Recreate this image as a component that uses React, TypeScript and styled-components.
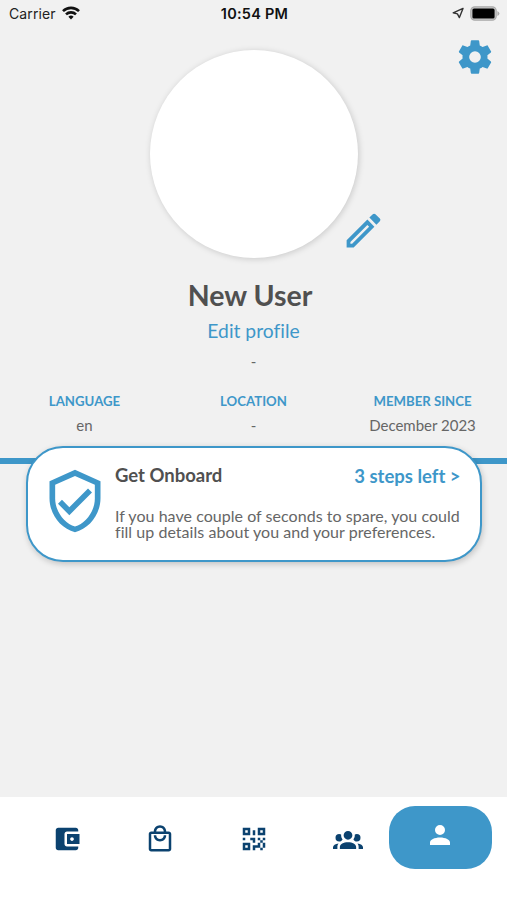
import React from "react";
import styled, { createGlobalStyle } from "styled-components";

const BLUE = "#3e97c9";
const NAVY = "#0b426f";

const Global = createGlobalStyle`
  * { box-sizing: border-box; }
  body {
    margin: 0;
    background: #f1f1f1;
    font-family: Lato, "Open Sans", sans-serif;
    font-variant-ligatures: none;
    color: #666;
  }
`;

const Screen = styled.div`
  width: 507px;
  height: 900px;
  display: flex;
  flex-direction: column;
  background: #f1f1f1;
  overflow: hidden;
`;

const StatusBar = styled.header`
  display: grid;
  grid-template-columns: 1fr auto 1fr;
  align-items: center;
  height: 28px;
  padding: 0 7px 2px 9px;
  font-family: Inter, sans-serif;
  font-size: 14px;
  color: #222;
`;
const Carrier = styled.div`
  display: flex;
  align-items: center;
  gap: 6px;
  letter-spacing: 0.1px;
`;
const Clock = styled.div`
  font-weight: 600;
  font-size: 14.5px;
  letter-spacing: 0.25px;
  color: #111;
`;
const Indicators = styled.div`
  display: flex;
  justify-content: flex-end;
  align-items: center;
  gap: 6px;
`;

const Profile = styled.section`
  position: relative;
  display: flex;
  flex-direction: column;
  align-items: center;
  padding-top: 21.5px;
  height: 365px;
`;
const Avatar = styled.div`
  width: 208px;
  height: 208px;
  border-radius: 50%;
  background: #fff;
  box-shadow: 1px 1px 6px rgba(0, 0, 0, 0.17);
`;
const IconButton = styled.button<{ $top: number; $left: number }>`
  position: absolute;
  top: ${(p) => p.$top}px;
  left: ${(p) => p.$left}px;
  padding: 0;
  border: 0;
  background: none;
  line-height: 0;
`;
const Name = styled.h1`
  margin: 19.5px 7px 0 0;
  font-size: 28.5px;
  line-height: 36px;
  font-weight: 700;
  color: #505050;
`;
const EditLink = styled.a`
  margin-top: 6px;
  font-size: 19.3px;
  line-height: 24px;
  color: ${BLUE};
`;
const Bio = styled.p`
  margin: 8px 0 0;
  font-size: 15px;
  line-height: 20px;
`;

const Stats = styled.dl`
  display: grid;
  grid-template-columns: repeat(3, 169px);
  height: 65px;
  margin: 0;
  text-align: center;
`;
const StatLabel = styled.dt`
  font-size: 13.2px;
  line-height: 16px;
  font-weight: 700;
  color: ${BLUE};
`;
const StatValue = styled.dd`
  margin: 6px 0 0;
  font-size: 15px;
  line-height: 20px;
`;

const Banner = styled.section`
  display: flex;
  flex-direction: column;
  flex: 1;
`;
const Divider = styled.div`
  height: 6px;
  flex: none;
  background: ${BLUE};
`;
const Card = styled.article`
  position: relative;
  display: flex;
  width: 456px;
  height: 116px;
  margin: -18px 0 0 26px;
  padding: 18.5px 0 0 13px;
  border: 2.5px solid ${BLUE};
  border-radius: 37px;
  background: #fff;
  box-shadow: 1px 2px 6px rgba(0, 0, 0, 0.2);
`;
const CardBody = styled.div`
  width: 345.5px;
  margin: -3px 0 0 6px;
`;
const CardHead = styled.div`
  display: flex;
  justify-content: space-between;
  font-size: 18.5px;
  line-height: 22px;
  font-weight: 700;
  white-space: nowrap;
`;
const CardTitle = styled.span`
  color: #505050;
`;
const CardAction = styled.span`
  padding-top: 1px;
  color: ${BLUE};
`;
const CardText = styled.p`
  margin: 21px 0 0;
  font-size: 16px;
  line-height: 16px;
  letter-spacing: 0.04px;
  white-space: nowrap;
`;

const TabBar = styled.nav`
  display: flex;
  height: 103.5px;
  padding: 9.5px 15px 0 20px;
  background: #fff;
`;
const Tab = styled.button<{ $active?: boolean }>`
  display: flex;
  align-items: center;
  justify-content: center;
  flex: none;
  width: ${(p) => (p.$active ? 103.5 : 93.6)}px;
  height: ${(p) => (p.$active ? 63 : 66)}px;
  margin-left: ${(p) => (p.$active ? -5.8 : 0)}px;
  padding: 0 0 ${(p) => (p.$active ? 5 : 0)}px;
  border: 0;
  border-radius: 26px;
  background: ${(p) => (p.$active ? BLUE : "transparent")};
  color: ${(p) => (p.$active ? "#fff" : NAVY)};
`;

const paths = {
  cog: "M12 15.5A3.5 3.5 0 0 1 8.5 12 3.5 3.5 0 0 1 12 8.5a3.5 3.5 0 0 1 3.5 3.5 3.5 3.5 0 0 1-3.5 3.5m7.43-2.53c.04-.32.07-.64.07-.97s-.03-.66-.07-1l2.11-1.63c.19-.15.24-.42.12-.64l-2-3.46c-.12-.22-.39-.31-.61-.22l-2.49 1c-.52-.39-1.06-.73-1.69-.98l-.37-2.65A.506.506 0 0 0 14 2h-4c-.25 0-.46.18-.5.42l-.37 2.65c-.63.25-1.17.59-1.69.98l-2.49-1c-.22-.09-.49 0-.61.22l-2 3.46c-.13.22-.07.49.12.64L4.57 11c-.04.34-.07.67-.07 1s.03.65.07.97l-2.11 1.66c-.19.15-.25.42-.12.64l2 3.46c.12.22.39.3.61.22l2.49-1.01c.52.4 1.06.74 1.69.99l.37 2.65c.04.24.25.42.5.42h4c.25 0 .46-.18.5-.42l.37-2.65c.63-.26 1.17-.59 1.69-.99l2.49 1.01c.22.08.49 0 .61-.22l2-3.46c.12-.22.07-.49-.12-.64z",
  pencil: "M14.06 9l.94.94L5.92 19H5v-.92L14.06 9m3.6-6c-.25 0-.51.1-.7.29l-1.83 1.83 3.75 3.75 1.83-1.83c.39-.39.39-1.04 0-1.41l-2.34-2.34c-.2-.2-.45-.29-.71-.29m-3.6 3.19L3 17.25V21h3.75L17.81 9.94z",
  shield: "M21 11c0 5.55-3.84 10.74-9 12-5.16-1.26-9-6.45-9-12V5l9-4 9 4zm-9 10c3.75-1 7-5.46 7-9.78V6.3l-7-3.12L5 6.3v4.92C5 15.54 8.25 20 12 21m-2-4-4-4 1.41-1.41L10 14.17l6.59-6.59L18 9",
  wallet: "M21 18v1c0 1.1-.9 2-2 2H5c-1.11 0-2-.9-2-2V5c0-1.1.89-2 2-2h14c1.1 0 2 .9 2 2v1h-9c-1.11 0-2 .9-2 2v8c0 1.1.89 2 2 2zm-9-2h10V8H12zm4-2.5c-.83 0-1.5-.67-1.5-1.5s.67-1.5 1.5-1.5 1.5.67 1.5 1.5-.67 1.5-1.5 1.5",
  bag: "M19 6h-2c0-2.76-2.24-5-5-5S7 3.24 7 6H5c-1.1 0-1.99.9-1.99 2L3 20c0 1.1.9 2 2 2h14c1.1 0 2-.9 2-2V8c0-1.1-.9-2-2-2m-7-3c1.66 0 3 1.34 3 3H9c0-1.66 1.34-3 3-3m7 17H5V8h14zm-7-8c-1.66 0-3-1.34-3-3H7c0 2.76 2.24 5 5 5s5-2.24 5-5h-2c0 1.66-1.34 3-3 3",
  qr: "M3 11h2v2H3v-2m8-6h2v4h-2V5m-2 6h4v4h-2v-2H9v-2m6 0h2v2h2v-2h2v2h-2v2h2v4h-2v2h-2v-2h-4v2h-2v-4h4v-2h2v-2h-2v-2m4 8v-4h-2v4h2M15 3h6v6h-6V3m2 2v2h2V5h-2M3 3h6v6H3V3m2 2v2h2V5H5M3 15h6v6H3v-6m2 2v2h2v-2H5Z",
  group: "M12 5.5A3.5 3.5 0 0 1 15.5 9a3.5 3.5 0 0 1-3.5 3.5A3.5 3.5 0 0 1 8.5 9 3.5 3.5 0 0 1 12 5.5M5 8c.56 0 1.08.15 1.53.42-.15 1.43.27 2.85 1.13 3.96C7.16 13.34 6.16 14 5 14a3 3 0 0 1-3-3 3 3 0 0 1 3-3m14 0a3 3 0 0 1 3 3 3 3 0 0 1-3 3c-1.16 0-2.16-.66-2.66-1.62a5.54 5.54 0 0 0 1.13-3.96c.45-.27.97-.42 1.53-.42M5.5 18.25c0-2.07 2.91-3.75 6.5-3.75s6.5 1.68 6.5 3.75V20h-13zM0 20v-1.5c0-1.39 1.89-2.56 4.45-2.9-.59.68-.95 1.62-.95 2.65V20zm24 0h-3.5v-1.75c0-1.03-.36-1.97-.95-2.65 2.56.34 4.45 1.51 4.45 2.9z",
  person: "M12 4a4 4 0 0 1 4 4 4 4 0 0 1-4 4 4 4 0 0 1-4-4 4 4 0 0 1 4-4m0 10c4.42 0 8 1.79 8 4v2H4v-2c0-2.21 3.58-4 8-4",
};

function Icon({ name, size, color = "currentColor" }: { name: keyof typeof paths; size: number; color?: string }) {
  return (
    <svg width={size} height={size} viewBox="0 0 24 24" fill={color} fillRule={name === "wallet" ? "evenodd" : "nonzero"} aria-hidden="true">
      <path d={paths[name]} />
    </svg>
  );
}

function Wifi() {
  return (
    <svg width="18" height="14" viewBox="0 0 18 14" fill="none" stroke="#111" strokeWidth="2.6">
      <path d="M1 5.1a11.5 11.5 0 0 1 16 0M4 8.4a7.2 7.2 0 0 1 10 0" />
      <path d="M9 13.4l-2.6-2.7a3.8 3.8 0 0 1 5.2 0z" fill="#111" stroke="none" />
    </svg>
  );
}

function Location() {
  return (
    <svg width="12" height="12" viewBox="0 0 12 12" fill="none" stroke="#333" strokeWidth="1.4" strokeLinejoin="round">
      <path d="M11 1.4L1.2 5.8l4.2 1.1L7.4 10.6z" />
    </svg>
  );
}

function Battery() {
  return (
    <svg width="30" height="15" viewBox="0 0 30 15">
      <rect x="0.8" y="0.8" width="25.4" height="13.4" rx="4" fill="#ccc" stroke="#aaa" strokeWidth="1.2" />
      <rect x="2.4" y="2.4" width="22.2" height="10.2" rx="1.6" fill="#000" />
      <path d="M27.4 5v5q2-1 2-2.5t-2-2.5z" fill="#aaa" />
    </svg>
  );
}

const stats = [
  { label: "LANGUAGE", value: "en" },
  { label: "LOCATION", value: "-" },
  { label: "MEMBER SINCE", value: "December 2023" },
];

const tabs: (keyof typeof paths)[] = ["wallet", "bag", "qr", "group", "person"];

export default function App() {
  return (
    <Screen>
      <Global />
      <StatusBar>
        <Carrier>Carrier <Wifi /></Carrier>
        <Clock>10:54 PM</Clock>
        <Indicators><Location /><Battery /></Indicators>
      </StatusBar>
      <Profile>
        <Avatar />
        <IconButton $top={9} $left={455.3} aria-label="Settings"><Icon name="cog" size={40} color={BLUE} /></IconButton>
        <IconButton $top={180} $left={341} aria-label="Change photo"><Icon name="pencil" size={45} color={BLUE} /></IconButton>
        <Name>New User</Name>
        <EditLink>Edit profile</EditLink>
        <Bio>-</Bio>
      </Profile>
      <Stats>
        {stats.map((s) => (
          <div key={s.label}>
            <StatLabel>{s.label}</StatLabel>
            <StatValue>{s.value}</StatValue>
          </div>
        ))}
      </Stats>
      <Banner>
        <Divider />
        <Card>
          <Icon name="shield" size={68} color={BLUE} />
          <CardBody>
            <CardHead>
              <CardTitle>Get Onboard</CardTitle>
              <CardAction>3 steps left &gt;</CardAction>
            </CardHead>
            <CardText>
              If you have couple of seconds to spare, you could
              <br />
              fill up details about you and your preferences.
            </CardText>
          </CardBody>
        </Card>
      </Banner>
      <TabBar>
        {tabs.map((t) => (
          <Tab key={t} $active={t === "person"} aria-label={t}>
            <Icon name={t} size={30} />
          </Tab>
        ))}
      </TabBar>
    </Screen>
  );
}
